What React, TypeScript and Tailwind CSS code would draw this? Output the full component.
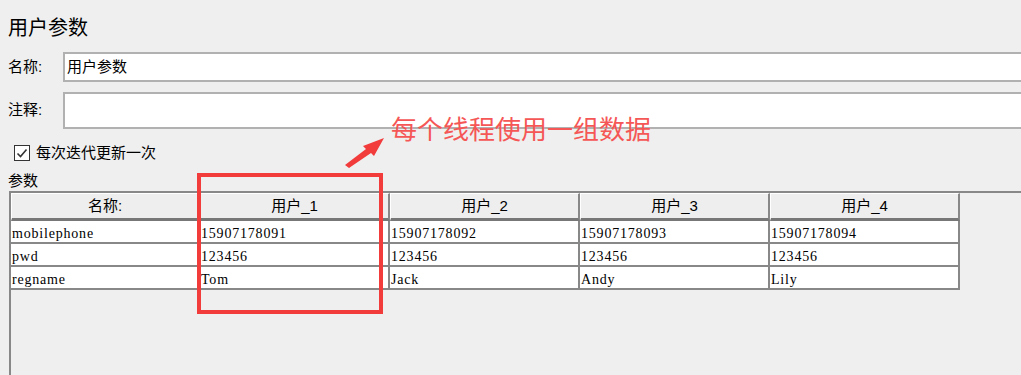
const cjk = "font-['Liberation_Sans','Noto_Sans_CJK_SC',sans-serif]";
const serif = "font-['Liberation_Serif','Noto_Sans_CJK_SC',serif]";

const columns = ["名称:", "用户_1", "用户_2", "用户_3", "用户_4"];
const rows = [
  ["mobilephone", "15907178091", "15907178092", "15907178093", "15907178094"],
  ["pwd", "123456", "123456", "123456", "123456"],
  ["regname", "Tom", "Jack", "Andy", "Lily"],
];

function colWidth(i: number) {
  return i === 0 ? "w-[189px]" : "w-[190px]";
}

export default function App() {
  return (
    <div className={`relative flex h-[375px] w-[1021px] flex-col overflow-hidden bg-[#efefef] text-black ${cjk}`}>
      <h1 className="ml-[8px] mt-[16px] text-[20px] font-normal leading-[24px]">用户参数</h1>

      <div className="mt-[12px] flex h-[30px] items-center">
        <label className="w-[63px] pl-[8px] text-[15px]">名称:</label>
        <div className="flex h-full flex-1 items-center border-2 border-r-0 border-[#b1b1b1] bg-white pl-[2px] text-[15px]">
          用户参数
        </div>
      </div>

      <div className="mt-[10px] flex h-[37px] items-center">
        <label className="w-[63px] pl-[8px] text-[15px]">注释:</label>
        <div className="h-full flex-1 border-2 border-r-0 border-[#b1b1b1] bg-white" />
      </div>

      <div className="mt-[14px] flex h-[19px] items-center">
        <span className="ml-[14px] flex h-[16px] w-[16px] items-center justify-center border border-[#333] bg-white">
          <svg width="12" height="12" viewBox="0 0 12 12">
            <path d="M1.5 6.5 L4.5 9.5 L10.5 2.5" fill="none" stroke="#333" strokeWidth="1.6" />
          </svg>
        </span>
        <span className="ml-[6px] text-[15px] leading-[19px]">每次迭代更新一次</span>
      </div>

      <div className="ml-[8px] mt-[10px] text-[15px] leading-[18px]">参数</div>

      <div className="ml-[9px] mt-[1px] flex-1 border-l-2 border-t-2 border-[#888]">
        <div className="flex h-[28px]">
          {columns.map((c, i) => (
            <div
              key={c}
              className={`${colWidth(i)} flex items-center justify-center border-b-[3px] border-l border-r-2 border-t border-b-[#777] border-l-white border-r-[#888] border-t-white bg-[#eeeeee] pt-[1px] text-[15px]`}
            >
              {c}
            </div>
          ))}
        </div>
        {rows.map((r) => (
          <div key={r[0]} className="flex h-[23px]">
            {r.map((v, i) => (
              <div
                key={i}
                className={`${colWidth(i)} flex items-center border-b-2 border-r-2 border-[#888] bg-white pl-[1px] pt-[3px] text-[14px] tracking-[0.8px] ${serif}`}
              >
                {v}
              </div>
            ))}
          </div>
        ))}
      </div>

      <div className="absolute left-[197px] top-[173px] h-[141px] w-[186px] border-4 border-[#f23b3b]" />

      <svg className="absolute left-[340px] top-[132px]" width="50" height="38" viewBox="0 0 50 38">
        <polygon points="5,33 26,17 23,14 44,6 34,24 31,21 9,36" fill="#f23b3b" />
      </svg>

      <div className="absolute left-[391px] top-[113px] text-[26px] leading-[34px] text-[#f55656]">
        每个线程使用一组数据
      </div>
    </div>
  );
}
